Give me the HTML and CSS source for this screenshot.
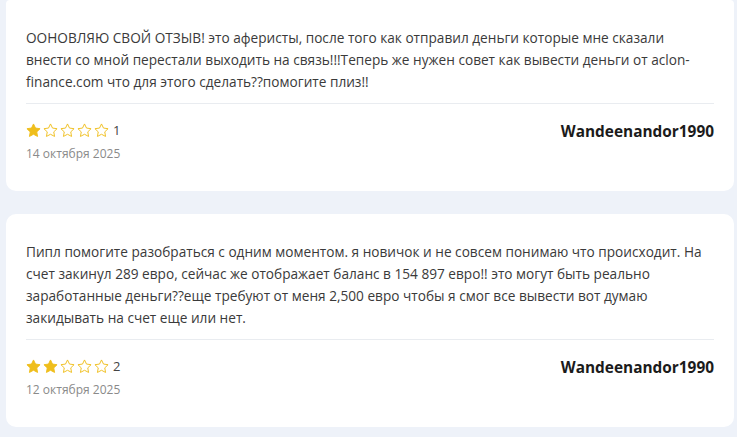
FILE: index.html
```html
<!DOCTYPE html>
<html lang="ru">
<head>
<meta charset="utf-8">
<link rel="stylesheet" href="styles.css">
</head>
<body>
<div class="list">
  <div class="card card-first">
    <p class="text">ООНОВЛЯЮ СВОЙ ОТЗЫВ! это аферисты, после того как отправил деньги которые мне сказали внести со мной перестали выходить на связь!!!Теперь же нужен совет как вывести деньги от aclon-finance.com что для этого сделать??помогите плиз!!</p>
    <div class="foot">
      <div class="meta">
        <div class="rating">
          <svg class="star on" viewBox="0 0 24 24"><path d="M12 1.5l3.2 6.6 7.3 1-5.3 5.1 1.3 7.3L12 18l-6.5 3.5 1.3-7.3-5.3-5.1 7.3-1z"/></svg>
          <svg class="star" viewBox="0 0 24 24"><path d="M12 1.5l3.2 6.6 7.3 1-5.3 5.1 1.3 7.3L12 18l-6.5 3.5 1.3-7.3-5.3-5.1 7.3-1z"/></svg>
          <svg class="star" viewBox="0 0 24 24"><path d="M12 1.5l3.2 6.6 7.3 1-5.3 5.1 1.3 7.3L12 18l-6.5 3.5 1.3-7.3-5.3-5.1 7.3-1z"/></svg>
          <svg class="star" viewBox="0 0 24 24"><path d="M12 1.5l3.2 6.6 7.3 1-5.3 5.1 1.3 7.3L12 18l-6.5 3.5 1.3-7.3-5.3-5.1 7.3-1z"/></svg>
          <svg class="star" viewBox="0 0 24 24"><path d="M12 1.5l3.2 6.6 7.3 1-5.3 5.1 1.3 7.3L12 18l-6.5 3.5 1.3-7.3-5.3-5.1 7.3-1z"/></svg>
          <span class="num">1</span>
        </div>
        <div class="date">14 октября 2025</div>
      </div>
      <div class="author">Wandeenandor1990</div>
    </div>
  </div>
  <div class="card">
    <p class="text">Пипл помогите разобраться с одним моментом. я новичок и не совсем понимаю что происходит. На счет закинул 289 евро, сейчас же отображает баланс в 154 897 евро!! это могут быть реально заработанные деньги??еще требуют от меня 2,500 евро чтобы я смог все вывести вот думаю закидывать на счет еще или нет.</p>
    <div class="foot">
      <div class="meta">
        <div class="rating">
          <svg class="star on" viewBox="0 0 24 24"><path d="M12 1.5l3.2 6.6 7.3 1-5.3 5.1 1.3 7.3L12 18l-6.5 3.5 1.3-7.3-5.3-5.1 7.3-1z"/></svg>
          <svg class="star on" viewBox="0 0 24 24"><path d="M12 1.5l3.2 6.6 7.3 1-5.3 5.1 1.3 7.3L12 18l-6.5 3.5 1.3-7.3-5.3-5.1 7.3-1z"/></svg>
          <svg class="star" viewBox="0 0 24 24"><path d="M12 1.5l3.2 6.6 7.3 1-5.3 5.1 1.3 7.3L12 18l-6.5 3.5 1.3-7.3-5.3-5.1 7.3-1z"/></svg>
          <svg class="star" viewBox="0 0 24 24"><path d="M12 1.5l3.2 6.6 7.3 1-5.3 5.1 1.3 7.3L12 18l-6.5 3.5 1.3-7.3-5.3-5.1 7.3-1z"/></svg>
          <svg class="star" viewBox="0 0 24 24"><path d="M12 1.5l3.2 6.6 7.3 1-5.3 5.1 1.3 7.3L12 18l-6.5 3.5 1.3-7.3-5.3-5.1 7.3-1z"/></svg>
          <span class="num">2</span>
        </div>
        <div class="date">12 октября 2025</div>
      </div>
      <div class="author">Wandeenandor1990</div>
    </div>
  </div>
</div>
</body>
</html>
```
FILE: styles.css
```css
html, body {
  margin: 0;
  padding: 0;
  background: #eef2f9;
}
body {
  font-family: "Open Sans", "Noto Sans", sans-serif;
  color: #3a3a3a;
}
.list {
  display: flex;
  flex-direction: column;
  gap: 23px;
  padding: 0 3px 0 6px;
}
.card {
  background: #ffffff;
  border-radius: 10px;
  padding: 27px 20px 29px 20px;
}
.card-first {
  border-top-left-radius: 4px;
  border-top-right-radius: 4px;
}
.text {
  margin: 0;
  font-size: 13.65px;
  line-height: 22px;
  padding: 0 8px 10px 0;
  border-bottom: 1px solid #e9ecf0;
}
.foot {
  display: flex;
  justify-content: space-between;
  align-items: flex-start;
  padding-top: 17px;
}
.rating {
  display: flex;
  align-items: center;
  gap: 2px;
  height: 18px;
}
.star {
  width: 15px;
  height: 15px;
  fill: none;
  stroke: #efbe1c;
  stroke-width: 1.5;
  stroke-linejoin: round;
}
.star.on {
  fill: #efbe1c;
}
.num {
  font-size: 13px;
  line-height: 18px;
  color: #444;
  margin-left: 2px;
}
.date {
  margin-top: 7px;
  font-size: 12px;
  line-height: 16px;
  color: #8a8a8a;
}
.author {
  font-weight: 700;
  font-size: 15.4px;
  line-height: 20px;
  color: #1b1b1b;
  padding-top: 1px;
}
```
